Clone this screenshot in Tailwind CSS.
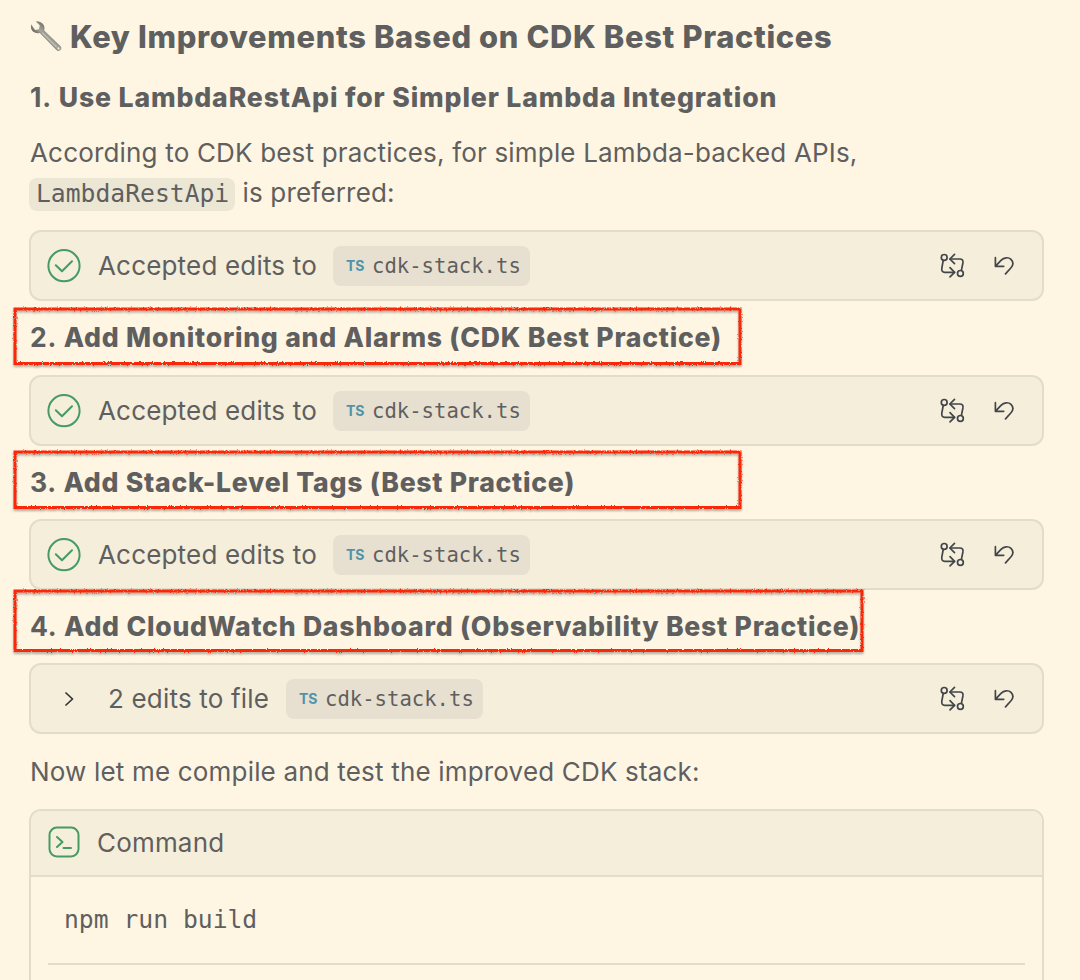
<!DOCTYPE html>
<html lang="en">
<head>
    <meta charset="UTF-8">
    <meta name="viewport" content="width=device-width, initial-scale=1.0">
    <title>CDK Best Practices</title>
    <!-- Tailwind CSS CDN -->
    <script src="https://cdn.jsdelivr.net/npm/@tailwindcss/browser@4"></script>
</head>
<body class="h-[980px] w-[1080px] overflow-hidden bg-[#fef5e2] pl-[29px] pr-9 font-['Inter','Noto_Sans',sans-serif] tracking-[0.18px] text-[#5f5f5f]">

    <!-- Shared icons -->
    <svg class="hidden">
        <filter id="crayon" x="-5%" y="-20%" width="110%" height="140%" color-interpolation-filters="sRGB">
            <feTurbulence type="fractalNoise" baseFrequency="0.7" numOctaves="2" seed="4" result="noise" />
            <feDisplacementMap in="SourceGraphic" in2="noise" scale="2.8" xChannelSelector="R" yChannelSelector="G" />
        </filter>
        <symbol id="check" viewBox="0 0 34 34">
            <circle cx="17" cy="16.7" r="15.6" fill="none" stroke="#459b62" stroke-width="2" />
            <path d="M8.8 16.3l6.2 6L25 12.3" fill="none" stroke="#459b62" stroke-width="2" stroke-linecap="round" stroke-linejoin="round" />
        </symbol>
        <symbol id="diff" viewBox="0 0 26 26">
            <g fill="none" stroke="#424549" stroke-width="1.7" stroke-linecap="round" stroke-linejoin="round">
                <circle cx="4.2" cy="4.4" r="2.9" />
                <circle cx="20.4" cy="20.4" r="2.9" />
                <path d="M3.2 7.5L1.8 15.3q-.5 4 3 4H14.5" />
                <path d="M10 14.7l4.6 4.6L10 23.9" />
                <path d="M21.4 17.3l1.5-7.3q.6-4-3-4H10" />
                <path d="M14.5 1.4L9.9 6l4.6 4.6" />
            </g>
        </symbol>
        <symbol id="undo" viewBox="0 0 20 20">
            <path d="M1.4 1.7v8.6h8.3M1.6 10.1L7 4.4C10 1.2 14.6 1 17 3.4c2.4 2.5 2.3 5.9-.2 8.6L11.5 17.9" fill="none" stroke="#424549" stroke-width="1.7" stroke-linecap="round" stroke-linejoin="round" />
        </symbol>
    </svg>

    <h2 class="flex h-[74px] items-center whitespace-nowrap text-[30.8px] font-extrabold">
        <svg class="mr-[7px] h-[34px] w-[34px] shrink-0" viewBox="0 0 34 34">
            <defs>
                <linearGradient id="steel" x1="0" y1="1" x2="1" y2="0">
                    <stop offset="0.35" stop-color="#5f5e58" />
                    <stop offset="0.5" stop-color="#a9a8a0" />
                    <stop offset="0.65" stop-color="#77766f" />
                </linearGradient>
            </defs>
            <path d="M2.2 4.2Q1 8.6 4 11.4q3 2.6 6.8 1.5L27.4 30q1.6 1.8 3.6.6 2.2-1.6.9-4L15.2 10.6q1-4-1.4-6.8Q10.8.6 6.8 1.4l4 4.2-1 3.6-3.7.8z" fill="url(#steel)" />
            <path d="M13 12.6L27.5 27" stroke="#c1c0b8" stroke-width="1.2" />
            <circle cx="29.5" cy="28.4" r="1.1" fill="#efe8d9" />
        </svg>
        <span class="tracking-[0.68px]">Key Improvements Based on CDK Best Practices</span>
    </h2>

    <h3 class="flex h-[46px] items-center whitespace-nowrap pl-px pt-px text-[26.6px] font-extrabold tracking-[0.86px]">
        <span><span class="font-bold">1.</span> Use LambdaRestApi for Simpler Lambda Integration</span>
    </h3>

    <p class="mt-[13px] h-20 whitespace-nowrap pl-px text-[26px] leading-10">
        <span>According to CDK best practices, for simple Lambda-backed APIs,</span><br>
        <code class="-ml-px inline-block h-[33px] w-[206px] rounded-[8px] bg-[#ece6d4] px-[7px] align-middle font-['DejaVu_Sans_Mono',monospace] text-[24.7px] leading-[32px] tracking-normal">LambdaRestApi</code>
        <span>is preferred:</span>
    </p>

    <div class="mt-[17px] flex h-[71px] items-center rounded-[12px] border-2 border-[#e3dcc9] bg-[#f5eedb] pl-4 pr-[28px]">
        <svg class="h-[34px] w-[34px]"><use href="#check" /></svg>
        <span class="ml-[17px] w-[220px] whitespace-nowrap text-[26px]">Accepted edits to</span>
        <div class="ml-[15px] flex h-10 w-[197px] items-center rounded-[8px] bg-[#e7e0d0] pl-[13px]">
            <span class="w-[26px] text-[14px] font-bold tracking-normal text-[#4f93aa]">TS</span>
            <span class="pt-[2px] font-['DejaVu_Sans_Mono',monospace] text-[20.6px] tracking-normal">cdk-stack.ts</span>
        </div>
        <svg class="ml-auto h-[26px] w-[26px]"><use href="#diff" /></svg>
        <svg class="ml-7 h-5 w-5"><use href="#undo" /></svg>
    </div>

    <h3 class="relative flex h-[74px] items-center whitespace-nowrap pl-px text-[26.6px] font-extrabold tracking-[0.75px]">
        <span><span class="font-bold">2.</span> Add Monitoring and Alarms (CDK Best Practice)</span>
        <svg class="absolute -left-4 top-[6px] h-[60px] w-[730px] overflow-visible drop-shadow-[0_2px_1px_rgba(0,0,0,0.3)]">
            <rect x="2" y="2" width="725" height="54.5" fill="none" stroke="#fb2709" stroke-width="3" filter="url(#crayon)" />
        </svg>
    </h3>

    <div class="flex h-[71px] items-center rounded-[12px] border-2 border-[#e3dcc9] bg-[#f5eedb] pl-4 pr-[28px]">
        <svg class="h-[34px] w-[34px]"><use href="#check" /></svg>
        <span class="ml-[17px] w-[220px] whitespace-nowrap text-[26px]">Accepted edits to</span>
        <div class="ml-[15px] flex h-10 w-[197px] items-center rounded-[8px] bg-[#e7e0d0] pl-[13px]">
            <span class="w-[26px] text-[14px] font-bold tracking-normal text-[#4f93aa]">TS</span>
            <span class="pt-[2px] font-['DejaVu_Sans_Mono',monospace] text-[20.6px] tracking-normal">cdk-stack.ts</span>
        </div>
        <svg class="ml-auto h-[26px] w-[26px]"><use href="#diff" /></svg>
        <svg class="ml-7 h-5 w-5"><use href="#undo" /></svg>
    </div>

    <h3 class="relative flex h-[73px] items-center whitespace-nowrap pl-px text-[26.6px] font-extrabold tracking-[0.73px]">
        <span><span class="font-bold">3.</span> Add Stack-Level Tags (Best Practice)</span>
        <svg class="absolute -left-4 top-1 h-[60px] w-[730px] overflow-visible drop-shadow-[0_2px_1px_rgba(0,0,0,0.3)]">
            <rect x="2" y="2" width="725" height="55.5" fill="none" stroke="#fb2709" stroke-width="3" filter="url(#crayon)" />
        </svg>
    </h3>

    <div class="flex h-[71px] items-center rounded-[12px] border-2 border-[#e3dcc9] bg-[#f5eedb] pl-4 pr-[28px]">
        <svg class="h-[34px] w-[34px]"><use href="#check" /></svg>
        <span class="ml-[17px] w-[220px] whitespace-nowrap text-[26px]">Accepted edits to</span>
        <div class="ml-[15px] flex h-10 w-[197px] items-center rounded-[8px] bg-[#e7e0d0] pl-[13px]">
            <span class="w-[26px] text-[14px] font-bold tracking-normal text-[#4f93aa]">TS</span>
            <span class="pt-[2px] font-['DejaVu_Sans_Mono',monospace] text-[20.6px] tracking-normal">cdk-stack.ts</span>
        </div>
        <svg class="ml-auto h-[26px] w-[26px]"><use href="#diff" /></svg>
        <svg class="ml-7 h-5 w-5"><use href="#undo" /></svg>
    </div>

    <h3 class="relative flex h-[73px] items-center whitespace-nowrap pl-px text-[26.6px] font-extrabold tracking-[0.75px]">
        <span><span class="font-bold">4.</span> Add CloudWatch Dashboard (Observability Best Practice)</span>
        <svg class="absolute -left-4 -top-px h-[64px] w-[852px] overflow-visible drop-shadow-[0_2px_1px_rgba(0,0,0,0.3)]">
            <rect x="2" y="2" width="847" height="59.5" fill="none" stroke="#fb2709" stroke-width="3" filter="url(#crayon)" />
        </svg>
    </h3>

    <div class="flex h-[71px] items-center rounded-[12px] border-2 border-[#e3dcc9] bg-[#f5eedb] pl-[33px] pr-[28px]">
        <svg class="h-4 w-[10px]" viewBox="0 0 10 16">
            <path d="M2 2l6.5 6L2 14" fill="none" stroke="#303336" stroke-width="1.7" stroke-linecap="round" stroke-linejoin="round" />
        </svg>
        <span class="ml-[34px] w-[163px] whitespace-nowrap text-[26px]">2 edits to file</span>
        <div class="ml-[15px] flex h-10 w-[197px] items-center rounded-[8px] bg-[#e7e0d0] pl-[13px]">
            <span class="w-[26px] text-[14px] font-bold tracking-normal text-[#4f93aa]">TS</span>
            <span class="pt-[2px] font-['DejaVu_Sans_Mono',monospace] text-[20.6px] tracking-normal">cdk-stack.ts</span>
        </div>
        <svg class="ml-auto h-[26px] w-[26px]"><use href="#diff" /></svg>
        <svg class="ml-7 h-5 w-5"><use href="#undo" /></svg>
    </div>

    <p class="flex h-[75px] items-center whitespace-nowrap pl-px text-[26px]">
        <span>Now let me compile and test the improved CDK stack:</span>
    </p>

    <!-- Command panel -->
    <div class="h-[200px] rounded-[12px] border-2 border-[#e3dcc9]">
        <div class="flex h-[66px] items-center rounded-t-[10px] border-b-2 border-[#e3dcc9] bg-[#f5eedb] pb-[2px] pl-[17px]">
            <svg class="h-8 w-8" viewBox="0 0 32 32" fill="none" stroke="#459b62" stroke-width="2" stroke-linecap="round" stroke-linejoin="round">
                <rect x="1.5" y="1.5" width="29" height="29" rx="7.5" />
                <path d="M9 11l5.5 5L9 21M15.5 22h7.5" />
            </svg>
            <span class="ml-[17px] text-[26px]">Command</span>
        </div>
        <div class="mx-[17px] flex h-[88px] items-center border-b-2 border-[#e3dcc9] pl-4 font-['DejaVu_Sans_Mono',monospace] text-[24.7px] tracking-normal">npm run build</div>
    </div>
</body>
</html>
